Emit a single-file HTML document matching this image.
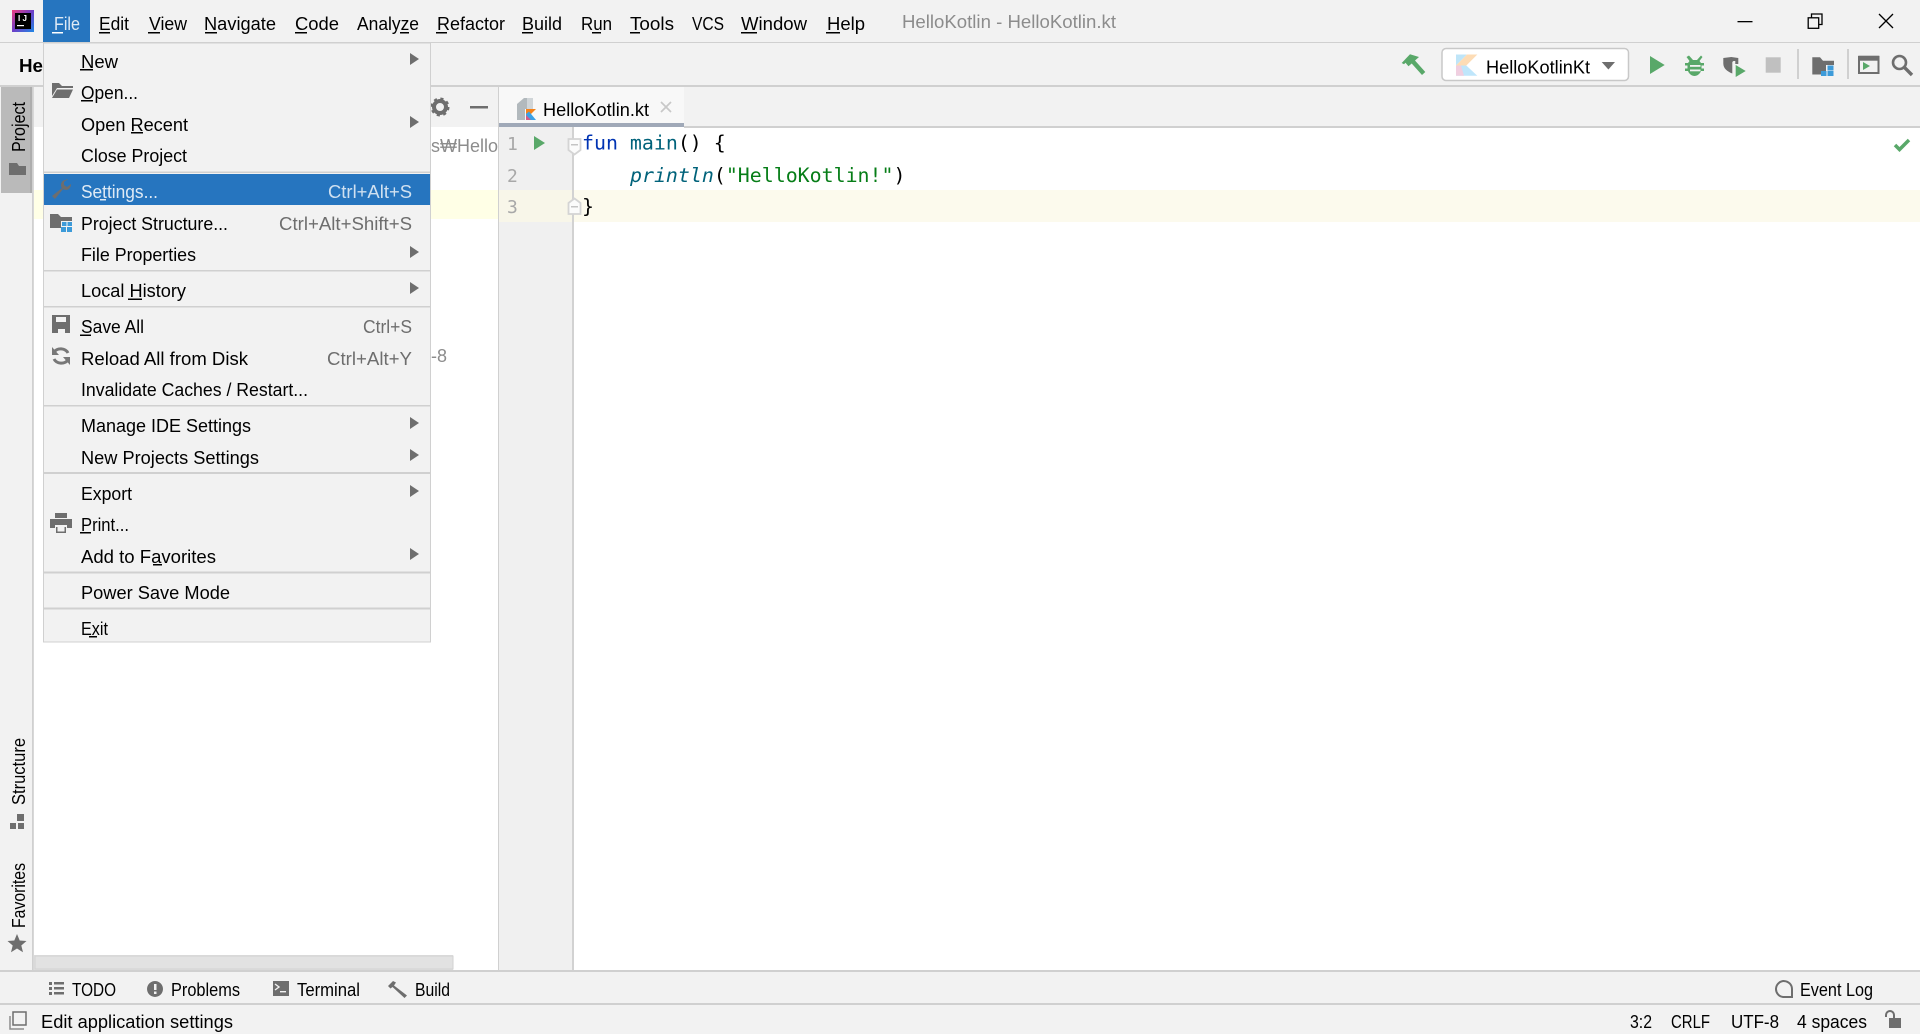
<!DOCTYPE html>
<html lang="en">
<head>
<meta charset="utf-8">
<title>HelloKotlin</title>
<style>
html,body{margin:0;padding:0;width:1920px;height:1034px;overflow:hidden;background:#f2f2f2}
svg{display:block}
text{font-family:"Liberation Sans","Noto Sans CJK KR",sans-serif;font-size:18px;fill:#000}
.s{fill:#6e6e6e}
.c{font-family:"DejaVu Sans Mono","Liberation Mono",monospace;font-size:19.9px}
.n{font-family:"DejaVu Sans Mono","Liberation Mono",monospace;font-size:18px;fill:#a8a8a8}
</style>
</head>
<body>
<svg width="1920" height="1034" viewBox="0 0 1920 1034" xmlns="http://www.w3.org/2000/svg">
<rect width="1920" height="1034" fill="#f2f2f2"/>

<!-- project panel -->
<rect x="33" y="127" width="465" height="843" fill="#fff"/>
<rect x="33" y="190" width="465" height="29" fill="#ffffe6"/>
<text x="431" y="152" textLength="67" lengthAdjust="spacingAndGlyphs" style="fill:#8c8c8c">s₩Hello</text>
<text x="431" y="362" textLength="16" lengthAdjust="spacingAndGlyphs" style="fill:#8c8c8c">-8</text>
<rect x="33" y="955" width="420" height="15" fill="#e0e0e0"/>
<rect x="35" y="956" width="418" height="13" fill="#e2e2e2" stroke="#d2d2d2"/>
<rect x="32" y="85" width="1" height="885" fill="#d0d0d0"/>
<rect x="33" y="85" width="1" height="885" fill="#d8d8d8"/>
<circle cx="440" cy="107" r="6" fill="none" stroke="#6e6e6e" stroke-width="4"/>
<circle cx="440" cy="107" r="8" fill="none" stroke="#6e6e6e" stroke-width="3" stroke-dasharray="3 3.3"/>
<rect x="470" y="106" width="18" height="2.5" fill="#6e6e6e"/>

<!-- editor -->
<rect x="498" y="86" width="1422" height="41" fill="#f2f2f2"/>
<rect x="574" y="127" width="1346" height="843" fill="#fff"/>
<rect x="499" y="127" width="73" height="843" fill="#f0f0f0"/>
<rect x="574" y="190" width="1346" height="32" fill="#fcfaed"/>
<rect x="499" y="190" width="73" height="32" fill="#f8f6e9"/>
<rect x="572" y="127" width="2" height="843" fill="#d2d2d2"/>
<rect x="498" y="85" width="1" height="885" fill="#d0d0d0"/>
<rect x="684" y="126" width="1236" height="2" fill="#d0d0d0"/>
<rect x="499" y="87" width="185" height="36" fill="#f8f8f8"/>
<rect x="499" y="123" width="185" height="4" fill="#a0a9b8"/>
<!-- tab file icon -->
<path d="M517 104l7-6h3v22h-10z" fill="#b2b9bd"/>
<path d="M527 98h6v11h-6z" fill="#d0d5d8"/>
<path d="M525 109h11l-5 5 5 6h-11z" fill="#f8f8f8"/>
<path d="M526 109h10l-5 5-5 0z" fill="#f58219"/>
<path d="M526 114l3-2.500 7 8.500h-10z" fill="#3aa1e6"/>
<path d="M526 115l5 5h-5z" fill="#d55a86"/>
<text x="543" y="116" textLength="106" lengthAdjust="spacingAndGlyphs">HelloKotlin.kt</text>
<path d="M661 102l10 10M671 102l-10 10" stroke="#c8c8c8" stroke-width="1.700" fill="none"/>

<text class="n" x="507" y="150">1</text>
<text class="n" x="507" y="182">2</text>
<text class="n" x="507" y="213">3</text>
<path d="M534 136l11 7-11 7z" fill="#59a869"/>
<path d="M568.500 139h12v11l-6 4.500-6-4.500z" fill="#fbfbfb" stroke="#d4d4d4" stroke-width="1.800"/>
<rect x="571" y="144" width="7" height="1.500" fill="#c4c4c4"/>
<path d="M568.500 214h12v-11l-6-4.500-6 4.500z" fill="#fbfbfb" stroke="#d4d4d4" stroke-width="1.800"/>
<rect x="571" y="206" width="7" height="1.500" fill="#c4c4c4"/>

<text class="c" x="582" y="149.500"><tspan style="fill:#0033b3">fun</tspan> <tspan style="fill:#00627a">main</tspan>() {</text>
<text class="c" x="630" y="182"><tspan style="fill:#00627a;font-style:italic">println</tspan>(<tspan style="fill:#067d17">"HelloKotlin!"</tspan>)</text>
<text class="c" x="582" y="213">}</text>
<path d="M1895 145l4.500 4.500 9.500-9.500" fill="none" stroke="#59a869" stroke-width="3.500"/>

<!-- left strip -->
<rect x="0" y="85" width="32" height="885" fill="#f2f2f2"/>
<rect x="1" y="86" width="31" height="107" fill="#bababa"/>
<rect x="30" y="86" width="2" height="107" fill="#adadad"/>
<text transform="translate(25 152) rotate(-90)" textLength="50" lengthAdjust="spacingAndGlyphs">Project</text>
<path d="M9 163h8l2 3h7v9H9z" fill="#6e6e6e"/>
<text transform="translate(25 805) rotate(-90)" textLength="67" lengthAdjust="spacingAndGlyphs">Structure</text>
<path d="M17 814h7v7h-7zM10 823h6v6h-6zM18 823h6v6h-6z" fill="#6e6e6e"/>
<text transform="translate(25 928) rotate(-90)" textLength="65" lengthAdjust="spacingAndGlyphs">Favorites</text>
<path d="M17 934l2.700 6.500 6.800.5-5.200 4.500 1.700 6.700-6-3.700-6 3.700 1.700-6.700-5.200-4.500 6.800-.5z" fill="#6e6e6e"/>

<!-- top toolbar row -->
<rect x="0" y="43" width="1920" height="42" fill="#f2f2f2"/>
<rect x="0" y="85" width="1920" height="2" fill="#d0d0d0"/>
<text x="19" y="72" textLength="24" lengthAdjust="spacingAndGlyphs" style="font-weight:bold">He</text>
<!-- hammer -->
<path d="M1401.700 63l8.300-8.700 9 2.700-4 3.500 10.300 11.500-3.300 3-10.300-11.500-3.200 2.800-3-3.600-1.500 1.500z" fill="#59a869"/>
<!-- config box -->
<rect x="1442" y="48.500" width="186.500" height="32" rx="4" fill="#fff" stroke="#c8c8c8" stroke-width="1.500"/>
<path d="M1456 54.500h11l-11 11z" fill="#bfe5f8"/>
<path d="M1467 54.500h10.300l-11 11h-10.300z" fill="#fddcb5"/>
<path d="M1456 65.500l10.300 0 11 10.200h-21.300z" fill="#bfe6fb"/>
<path d="M1456 65.500l5 0 3 10.200h-8z" fill="#f0cfe0"/>
<text x="1486" y="73.500" textLength="104" lengthAdjust="spacingAndGlyphs">HelloKotlinKt</text>
<path d="M1601.700 62h13.300l-6.600 7.500z" fill="#6e6e6e"/>
<!-- run -->
<path d="M1650 56l14.700 9-14.700 9z" fill="#59a869"/>
<!-- bug -->
<path d="M1689 55.500l4 4.500h4l4-4.500 1.500 1.500-3 4 1.500 2h3v2.500h-2.500v3h2.500v2.500h-3c-1 3-4 5-6.500 5s-5.500-2-6.500-5h-3v-2.500h2.500v-3h-2.500v-2.500h3l1.500-2-3-4z" fill="#59a869"/>
<rect x="1690" y="65" width="10.500" height="1.800" fill="#f2f2f2"/>
<rect x="1690" y="69.500" width="10.500" height="1.800" fill="#f2f2f2"/>
<!-- coverage -->
<path d="M1723.300 58l8-1 7 1v6h-3v-3h-1.500c-1 0-1.500 1-1.500 1.500v11c-5-2-9-5-9-10z" fill="#6e6e6e"/>
<path d="M1735.700 65l10 6-10 6z" fill="#59a869"/>
<rect x="1765.700" y="57.300" width="15" height="15.400" fill="#c0c0c0"/>
<rect x="1797" y="49" width="2" height="30" fill="#d0d0d0"/>
<!-- project structure top -->
<path d="M1812.300 57.300h7.700l3 3.500h11v4.200h-8v9.500h-13.700z" fill="#6e6e6e"/>
<path d="M1827.500 65.500h6v5h-6zM1821 71h5.500v5H1821zM1827.500 71h6v5h-6z" fill="#3d9bd9"/>
<rect x="1847" y="49" width="2" height="30" fill="#d0d0d0"/>
<rect x="1859" y="57" width="19.500" height="16" fill="none" stroke="#6e6e6e" stroke-width="2"/>
<rect x="1858.300" y="55.700" width="21" height="5" fill="#6e6e6e"/>
<path d="M1863 62l7 4-7 4z" fill="#59a869"/>
<circle cx="1899.500" cy="62.500" r="6.500" fill="none" stroke="#6e6e6e" stroke-width="2.600"/>
<path d="M1904.500 67.500l7.500 7.500" stroke="#6e6e6e" stroke-width="3.400" fill="none"/>

<!-- title bar -->
<rect x="0" y="0" width="1920" height="42" fill="#f2f2f2"/>
<rect x="0" y="42" width="1920" height="1" fill="#d0d0d0"/>
<defs><linearGradient id="lg" x1="0" y1="0" x2="1" y2="1"><stop offset="0" stop-color="#f13f7f"/><stop offset=".5" stop-color="#6d3fc8"/><stop offset="1" stop-color="#1e88e5"/></linearGradient></defs>
<rect x="12" y="10" width="22" height="22" fill="url(#lg)"/>
<rect x="15" y="13" width="16" height="16" fill="#000"/>
<text x="18" y="21" style="font-size:8px;font-weight:bold;fill:#fff" textLength="9" lengthAdjust="spacing">IJ</text>
<rect x="17" y="25" width="7" height="1.200" fill="#fff"/>
<rect x="43" y="0" width="47" height="42" fill="#2675bf"/>

<text x="54" y="30" textLength="26" lengthAdjust="spacingAndGlyphs" style="fill:#dfeaf5">File</text>
<text x="99" y="30" textLength="30" lengthAdjust="spacingAndGlyphs">Edit</text>
<text x="149" y="30" textLength="38" lengthAdjust="spacingAndGlyphs">View</text>
<text x="204" y="30" textLength="72" lengthAdjust="spacingAndGlyphs">Navigate</text>
<text x="295" y="30" textLength="44" lengthAdjust="spacingAndGlyphs">Code</text>
<text x="357" y="30" textLength="62" lengthAdjust="spacingAndGlyphs">Analyze</text>
<text x="437" y="30" textLength="68" lengthAdjust="spacingAndGlyphs">Refactor</text>
<text x="522" y="30" textLength="40" lengthAdjust="spacingAndGlyphs">Build</text>
<text x="581" y="30" textLength="31" lengthAdjust="spacingAndGlyphs">Run</text>
<text x="630" y="30" textLength="44" lengthAdjust="spacingAndGlyphs">Tools</text>
<text x="692" y="30" textLength="32" lengthAdjust="spacingAndGlyphs">VCS</text>
<text x="741" y="30" textLength="66" lengthAdjust="spacingAndGlyphs">Window</text>
<text x="827" y="30" textLength="38" lengthAdjust="spacingAndGlyphs">Help</text>
<text x="902" y="28" textLength="214" lengthAdjust="spacingAndGlyphs" style="fill:#8c8c8c">HelloKotlin - HelloKotlin.kt</text>
<g fill="#000">
<rect x="52" y="32" width="11" height="1.500" fill="#fff"/>
<rect x="99" y="32" width="11" height="1.500"/>
<rect x="148" y="32" width="12" height="1.500"/>
<rect x="205" y="32" width="12" height="1.500"/>
<rect x="295" y="32" width="12" height="1.500"/>
<rect x="400" y="32" width="9" height="1.500"/>
<rect x="436" y="32" width="11" height="1.500"/>
<rect x="522" y="32" width="11" height="1.500"/>
<rect x="592" y="32" width="9" height="1.500"/>
<rect x="630" y="32" width="10" height="1.500"/>
<rect x="741" y="32" width="16" height="1.500"/>
<rect x="826" y="32" width="14" height="1.500"/>
</g>
<!-- window controls -->
<rect x="1737.500" y="21" width="15" height="1.300" fill="#000"/>
<rect x="1808.200" y="17.800" width="10.500" height="10.500" fill="none" stroke="#000" stroke-width="1.300"/>
<path d="M1811.500 17.500v-3.500h10.500v10.500h-3" fill="none" stroke="#000" stroke-width="1.300"/>
<path d="M1879 14l14 14M1893 14l-14 14" stroke="#000" stroke-width="1.300" fill="none"/>

<!-- bottom bars -->
<rect x="0" y="970" width="1920" height="64" fill="#f2f2f2"/>
<rect x="0" y="970" width="1920" height="2" fill="#d0d0d0"/>
<rect x="0" y="1003" width="1920" height="2" fill="#d0d0d0"/>
<g fill="#6e6e6e">
<path d="M49 982h3v3h-3zM54 982h10v2.500H54zM49 987h3v3h-3zM54 987h10v2.500H54zM49 992h3v3h-3zM54 992h10v2.500H54z"/>
<path d="M155 981a8 8 0 1 0 .01 0zM154 984h2.500v6h-2.500zM154 991.500h2.500v2.500h-2.500z" fill-rule="evenodd"/>
<rect x="273" y="981" width="16" height="15"/>
<path d="M388 986l5-5 3 1.500-2 3 13 10-2.500 2.500-12-11-2 1.500z"/>
</g>
<path d="M275 984l4 3-4 3" stroke="#f2f2f2" stroke-width="1.400" fill="none"/>
<rect x="280" y="991" width="6" height="1.400" fill="#f2f2f2"/>
<text x="72" y="996" textLength="44" lengthAdjust="spacingAndGlyphs">TODO</text>
<text x="171" y="996" textLength="69" lengthAdjust="spacingAndGlyphs">Problems</text>
<text x="297" y="996" textLength="63" lengthAdjust="spacingAndGlyphs">Terminal</text>
<text x="415" y="996" textLength="35" lengthAdjust="spacingAndGlyphs">Build</text>
<path d="M1792 997h-9a8 8 0 1 1 9-8z" fill="none" stroke="#6e6e6e" stroke-width="2"/>
<text x="1800" y="996" textLength="73" lengthAdjust="spacingAndGlyphs">Event Log</text>
<rect x="13" y="1012" width="13" height="13" fill="none" stroke="#6e6e6e" stroke-width="1.500"/>
<path d="M10 1016v13h14" fill="none" stroke="#8c8c8c" stroke-width="1.500"/>
<text x="41" y="1028" textLength="192" lengthAdjust="spacingAndGlyphs">Edit application settings</text>
<text x="1630" y="1028" textLength="22" lengthAdjust="spacingAndGlyphs">3:2</text>
<text x="1671" y="1028" textLength="39" lengthAdjust="spacingAndGlyphs">CRLF</text>
<text x="1731" y="1028" textLength="48" lengthAdjust="spacingAndGlyphs">UTF-8</text>
<text x="1797" y="1028" textLength="70" lengthAdjust="spacingAndGlyphs">4 spaces</text>
<rect x="1889" y="1018" width="12" height="10" fill="#6e6e6e"/>
<path d="M1886 1017v-2a4 4 0 0 1 8 0v3" fill="none" stroke="#6e6e6e" stroke-width="2"/>

<!-- menu -->
<rect x="43.500" y="43" width="387" height="599" fill="#f2f2f2" stroke="#d0d0d0"/>
<rect x="44" y="174" width="386" height="31" fill="#2675bf"/>
<g fill="#d0d0d0">
<rect x="44" y="171.500" width="386" height="1.500"/>
<rect x="44" y="270" width="386" height="1.500"/>
<rect x="44" y="306" width="386" height="1.500"/>
<rect x="44" y="405" width="386" height="1.500"/>
<rect x="44" y="472" width="386" height="2"/>
<rect x="44" y="571.500" width="386" height="2"/>
<rect x="44" y="607.500" width="386" height="2"/>
</g>
<text x="81" y="68" textLength="37" lengthAdjust="spacingAndGlyphs">New</text>
<text x="81" y="99" textLength="57" lengthAdjust="spacingAndGlyphs">Open...</text>
<text x="81" y="131" textLength="107" lengthAdjust="spacingAndGlyphs">Open Recent</text>
<text x="81" y="162" textLength="106" lengthAdjust="spacingAndGlyphs">Close Project</text>
<text x="81" y="198" textLength="77" lengthAdjust="spacingAndGlyphs" style="fill:#dfeaf5">Settings...</text>
<text x="81" y="230" textLength="147" lengthAdjust="spacingAndGlyphs">Project Structure...</text>
<text x="81" y="261" textLength="115" lengthAdjust="spacingAndGlyphs">File Properties</text>
<text x="81" y="297" textLength="105" lengthAdjust="spacingAndGlyphs">Local History</text>
<text x="81" y="333" textLength="63" lengthAdjust="spacingAndGlyphs">Save All</text>
<text x="81" y="365" textLength="167" lengthAdjust="spacingAndGlyphs">Reload All from Disk</text>
<text x="81" y="396" textLength="227" lengthAdjust="spacingAndGlyphs">Invalidate Caches / Restart...</text>
<text x="81" y="432" textLength="170" lengthAdjust="spacingAndGlyphs">Manage IDE Settings</text>
<text x="81" y="464" textLength="178" lengthAdjust="spacingAndGlyphs">New Projects Settings</text>
<text x="81" y="500" textLength="51" lengthAdjust="spacingAndGlyphs">Export</text>
<text x="81" y="531" textLength="48" lengthAdjust="spacingAndGlyphs">Print...</text>
<text x="81" y="563" textLength="135" lengthAdjust="spacingAndGlyphs">Add to Favorites</text>
<text x="81" y="599" textLength="149" lengthAdjust="spacingAndGlyphs">Power Save Mode</text>
<text x="81" y="635" textLength="27" lengthAdjust="spacingAndGlyphs">Exit</text>

<text x="328" y="198" textLength="84" lengthAdjust="spacingAndGlyphs" style="fill:#cfe0f0">Ctrl+Alt+S</text>
<text class="s" x="279" y="230" textLength="133" lengthAdjust="spacingAndGlyphs">Ctrl+Alt+Shift+S</text>
<text class="s" x="363" y="333" textLength="49" lengthAdjust="spacingAndGlyphs">Ctrl+S</text>
<text class="s" x="327" y="365" textLength="85" lengthAdjust="spacingAndGlyphs">Ctrl+Alt+Y</text>

<g fill="#000">
<rect x="80" y="69" width="13" height="1.500"/>
<rect x="81" y="100" width="12" height="1.500"/>
<rect x="131" y="132" width="12" height="1.500"/>
<rect x="100" y="199" width="6" height="1.500" fill="#dfeaf5"/>
<rect x="128" y="298.500" width="14" height="1.500"/>
<rect x="80" y="334.500" width="11" height="1.500"/>
<rect x="80" y="532" width="11" height="1.500"/>
<rect x="153" y="564" width="9" height="1.500"/>
<rect x="89" y="636" width="8" height="1.500"/>
</g>
<g fill="#6e6e6e">
<path d="M410 53l9 6-9 6z"/>
<path d="M410 116l9 6-9 6z"/>
<path d="M410 246l9 6-9 6z"/>
<path d="M410 282l9 6-9 6z"/>
<path d="M410 417l9 6-9 6z"/>
<path d="M410 449l9 6-9 6z"/>
<path d="M410 485l9 6-9 6z"/>
<path d="M410 548l9 6-9 6z"/>
<!-- open folder -->
<path d="M52 83h7l3 3h11v2H57l-5 8z"/>
<path d="M57 89.500h16l-4 8.500H52z"/>
<!-- wrench -->
<path d="M66 180c-3 0-5 2-5 5 0 1 0 2 1 3l-10 8 3 3 8-10c1 .5 2 1 3 1 3 0 5-3 5-6l-4 3-3-2v-3l4-3c-1 0-2 0-2 1z"/>
<!-- project structure -->
<path d="M50 214h8l3 3h11v4h-11v7h-11z"/>
<!-- save -->
<path d="M52 315h18v18H52zM56 317v5h10v-5zM58 329v4h7v-4z" fill-rule="evenodd"/>
<!-- printer -->
<path d="M55 513h12v5H55zM50 519h22v9h-5v-3H55v3h-5zM56 527h10v6H56z"/>
</g>
<path d="M62 222h4.500v4H62zM67.500 222H72v4h-4.500zM61 227h5v5h-5zM67 227h5v5h-5z" fill="#3d9bd9"/>
<rect x="57.500" y="527" width="7" height="4.500" fill="#f2f2f2"/>
<path d="M68 353a8 7 0 0 0-14-1" fill="none" stroke="#787878" stroke-width="3"/>
<path d="M54 359a8 7 0 0 0 14 1" fill="none" stroke="#787878" stroke-width="3"/>
<path d="M52 347v8h7zM70 365v-8h-7z" fill="#787878"/>
</svg>
</body>
</html>
